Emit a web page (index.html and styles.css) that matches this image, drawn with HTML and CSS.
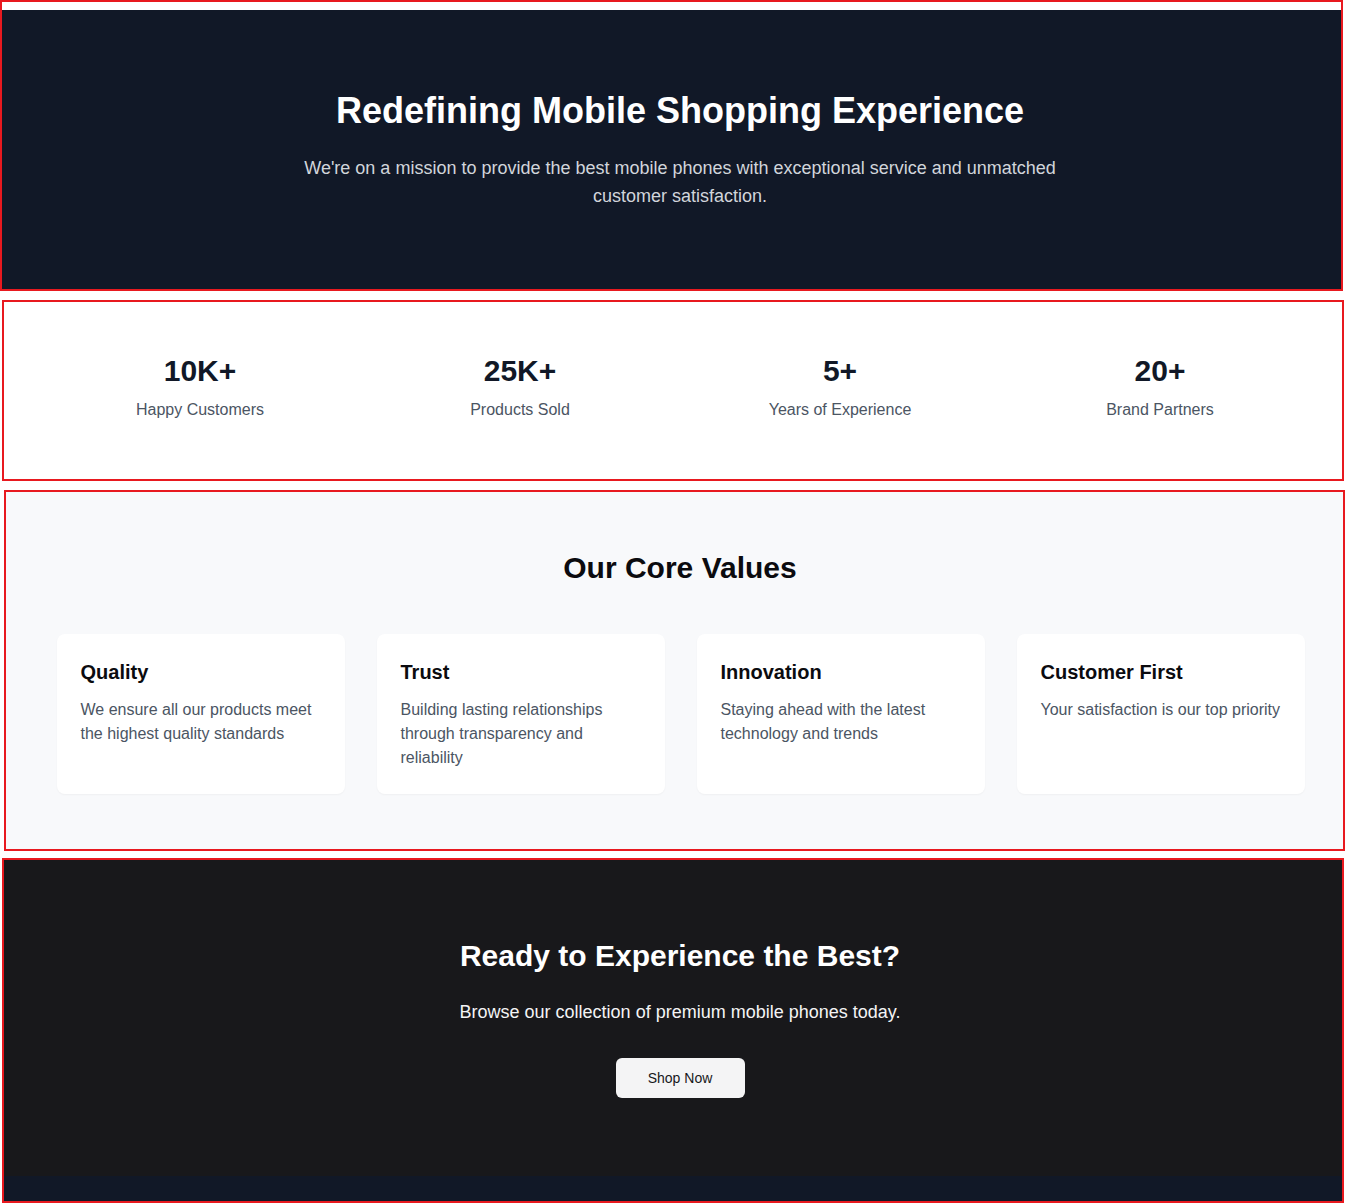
FILE: index.html
```html
<!DOCTYPE html>
<html lang="en">
<head>
<meta charset="utf-8">
<title>About</title>
<link rel="stylesheet" href="styles.css">
</head>
<body>
<div class="page">
  <section class="frame frame-hero">
    <div class="hero">
      <div class="wrap wrap-hero">
        <h1 class="hero-title">Redefining Mobile Shopping Experience</h1>
        <p class="hero-sub">We're on a mission to provide the best mobile phones with exceptional service and unmatched customer satisfaction.</p>
      </div>
    </div>
  </section>

  <section class="frame frame-stats">
    <div class="wrap wrap-stats stats">
      <div class="stat"><div class="stat-num">10K+</div><div class="stat-label">Happy Customers</div></div>
      <div class="stat"><div class="stat-num">25K+</div><div class="stat-label">Products Sold</div></div>
      <div class="stat"><div class="stat-num">5+</div><div class="stat-label">Years of Experience</div></div>
      <div class="stat"><div class="stat-num">20+</div><div class="stat-label">Brand Partners</div></div>
    </div>
  </section>

  <section class="frame frame-values">
    <div class="wrap wrap-values">
      <h2 class="values-title">Our Core Values</h2>
      <div class="cards">
        <div class="card"><h3 class="card-title">Quality</h3><p class="card-text">We ensure all our products meet the highest quality standards</p></div>
        <div class="card"><h3 class="card-title">Trust</h3><p class="card-text">Building lasting relationships through transparency and reliability</p></div>
        <div class="card"><h3 class="card-title">Innovation</h3><p class="card-text">Staying ahead with the latest technology and trends</p></div>
        <div class="card"><h3 class="card-title">Customer First</h3><p class="card-text">Your satisfaction is our top priority</p></div>
      </div>
    </div>
  </section>

  <section class="frame frame-cta">
    <div class="cta">
      <div class="wrap wrap-cta">
        <h2 class="cta-title">Ready to Experience the Best?</h2>
        <p class="cta-sub">Browse our collection of premium mobile phones today.</p>
        <a class="cta-btn" href="#">Shop Now</a>
      </div>
    </div>
    <div class="footer-band"></div>
  </section>
</div>
</body>
</html>
```

FILE: styles.css
```css
html, body {
  margin: 0;
  padding: 0;
  background: #ffffff;
  overflow-x: hidden;
}
body {
  font-family: "Liberation Sans", Arial, Helvetica, sans-serif;
  color: #111827;
}
h1, h2, h3, p { margin: 0; }

.page {
  display: flex;
  flex-direction: column;
  align-items: flex-start;
}

.frame {
  box-sizing: border-box;
  border: 2px solid #e8191f;
  overflow: hidden;
}

/* Hero */
.frame-hero {
  width: 1343px;
  height: 291px;
  padding-top: 8px;
  display: flex;
  flex-direction: column;
}
.hero {
  flex: 1;
  background: #111827;
  padding: 81px 0 79px;
}
.wrap {
  width: 1280px;
  text-align: center;
}
.wrap-hero { margin-left: 38px; }
.hero-title {
  font-size: 36px;
  line-height: 40px;
  font-weight: 700;
  color: #ffffff;
  margin-bottom: 23px;
}
.hero-sub {
  max-width: 768px;
  margin: 0 auto;
  font-size: 18px;
  line-height: 28px;
  color: #d1d5db;
}

/* Stats */
.frame-stats {
  width: 1342px;
  height: 181px;
  margin: 9px 0 0 2px;
  background: #ffffff;
}
.wrap-stats {
  margin-left: 36px;
  padding: 51px 0 57px;
  display: grid;
  grid-template-columns: repeat(4, 1fr);
}
.stat-num {
  font-size: 30px;
  line-height: 36px;
  font-weight: 700;
  color: #111827;
}
.stat-label {
  margin-top: 9px;
  font-size: 16px;
  line-height: 24px;
  color: #4b5563;
}

/* Values */
.frame-values {
  width: 1341px;
  height: 361px;
  margin: 9px 0 0 4px;
  background: #f8f9fb;
}
.wrap-values {
  margin-left: 34px;
  padding: 58px 0 54px;
}
.values-title {
  font-size: 30px;
  line-height: 36px;
  font-weight: 700;
  color: #0b0b0f;
  margin-bottom: 48px;
}
.cards {
  display: grid;
  grid-template-columns: repeat(4, 288px);
  gap: 32px;
  justify-content: center;
  text-align: left;
  padding-left: 1px;
}
.card {
  box-sizing: border-box;
  height: 160px;
  background: #ffffff;
  border-radius: 8px;
  padding: 24px;
  box-shadow: 0 1px 2px rgba(0, 0, 0, 0.04);
}
.card-title {
  font-size: 20px;
  line-height: 28px;
  font-weight: 700;
  color: #0b0b0f;
  margin-bottom: 12px;
}
.card-text {
  font-size: 16px;
  line-height: 24px;
  color: #4b5563;
}

/* CTA */
.frame-cta {
  width: 1342px;
  height: 345px;
  margin: 7px 0 0 2px;
  display: flex;
  flex-direction: column;
}
.cta {
  background: #18181b;
  padding: 78px 0 78px;
}
.wrap-cta { margin-left: 36px; }
.cta-title {
  font-size: 30px;
  line-height: 36px;
  font-weight: 700;
  color: #ffffff;
  margin-bottom: 24px;
}
.cta-sub {
  font-size: 18px;
  line-height: 28px;
  color: #f4f4f5;
  margin-bottom: 32px;
}
.cta-btn {
  display: inline-flex;
  align-items: center;
  justify-content: center;
  box-sizing: border-box;
  width: 129px;
  height: 40px;
  border-radius: 6px;
  background: #f4f4f5;
  color: #18181b;
  font-size: 14px;
  text-decoration: none;
}
.footer-band {
  flex: 1;
  background: #111827;
}
```
